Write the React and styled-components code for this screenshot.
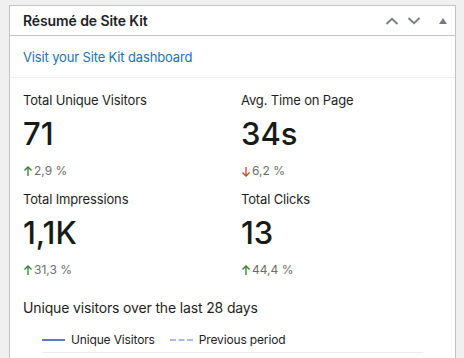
import React from 'react'
import styled, { createGlobalStyle } from 'styled-components'

const GlobalStyle = createGlobalStyle`
  body {
    margin: 0;
    background: #f0f0f1;
    font-family: Inter, "Liberation Sans", sans-serif;
    color: #1d2327;
  }
`

const Page = styled.div`
  padding: 5px 8px 0 9px;
  height: 358px;
  box-sizing: border-box;
  overflow: hidden;
`

const Panel = styled.section`
  background: #fff;
  border: 1px solid #c3c4c7;
  border-bottom: none;
  height: 400px;
`

const Header = styled.header`
  height: 29px;
  display: flex;
  align-items: center;
  justify-content: space-between;
  padding: 0 4px 0 13px;
  border-bottom: 1px solid #c3c4c7;
`

const Title = styled.h2`
  margin: 0;
  font-size: 14px;
  font-weight: 600;
  color: #1d2327;
  letter-spacing: -0.1px;
`

const Controls = styled.div`
  display: flex;
  align-items: center;
`

const Handle = styled.span`
  width: ${({ $small }) => ($small ? '16px' : '22px')};
  margin-left: ${({ $small }) => ($small ? '10px' : '0')};
  height: 16px;
  display: flex;
  align-items: center;
  justify-content: center;
  color: #787c82;
`

const LinkRow = styled.div`
  height: 41px;
  display: flex;
  align-items: center;
  padding: 0 13px;
  border-bottom: 1px solid #f0f0f1;
`

const Link = styled.a`
  font-size: 13px;
  color: #2271b1;
  text-decoration: none;
  letter-spacing: -0.15px;
`

const Body = styled.div`
  padding: 14px 13px 0 13px;
`

const Stats = styled.div`
  display: grid;
  grid-template-columns: 218px 1fr;
  row-gap: 12px;
`

const Stat = styled.div`
  display: flex;
  flex-direction: column;
`

const Label = styled.div`
  font-size: 13px;
  line-height: 16px;
  color: #1e1e1e;
  letter-spacing: -0.15px;
`

const Value = styled.div`
  margin-top: 8px;
  font-size: 31px;
  line-height: 36px;
  font-weight: 500;
  color: #161b18;
`

const Change = styled.div`
  margin-top: 11px;
  font-size: 12px;
  line-height: 16px;
  color: #6c6d6f;
  display: flex;
  align-items: center;
  gap: 1px;
`

const Arrow = styled.span`
  display: flex;
  color: ${({ $down }) => ($down ? '#b8462b' : '#2d7d2b')};
`

const ChartTitle = styled.h3`
  margin: 20px 0 0;
  font-size: 14px;
  line-height: 20px;
  font-weight: 400;
  color: #1e1e1e;
  letter-spacing: -0.15px;
`

const Legend = styled.div`
  margin-top: 14px;
  padding-left: 19px;
  display: flex;
  align-items: center;
  font-size: 12px;
  line-height: 16px;
  color: #1e1e1e;
  letter-spacing: -0.15px;
`

const LegendItem = styled.div`
  display: flex;
  align-items: center;
  gap: 6px;
  margin-right: 15px;
`

const Swatch = styled.span`
  width: 23px;
  height: 0;
  border-top: 2px ${({ $dashed }) => ($dashed ? 'dashed #a8bde6' : 'solid #5b7ac4')};
`

const Axis = styled.div`
  margin: 4px 19px 0 19px;
  border-top: 1px solid #ebebeb;
`

const ArrowIcon = ({ down }) => (
  <Arrow $down={down}>
    <svg width="10" height="11" viewBox="0 0 10 11" fill="none" stroke="currentColor" strokeWidth="1.3">
      {down ? (
        <>
          <path d="M5 1v9" />
          <path d="M1.5 6.5L5 10l3.5-3.5" />
        </>
      ) : (
        <>
          <path d="M5 10V1" />
          <path d="M1.5 4.5L5 1l3.5 3.5" />
        </>
      )}
    </svg>
  </Arrow>
)

const stats = [
  { label: 'Total Unique Visitors', value: '71', change: '2,9 %' },
  { label: 'Avg. Time on Page', value: '34s', change: '6,2 %', down: true },
  { label: 'Total Impressions', value: '1,1K', change: '31,3 %' },
  { label: 'Total Clicks', value: '13', change: '44,4 %' },
]

const App = () => {
  return (
    <>
      <GlobalStyle />
      <Page>
        <Panel>
          <Header>
            <Title>Résumé de Site Kit</Title>
            <Controls>
              <Handle>
                <svg width="14" height="8" viewBox="0 0 14 8" fill="none" stroke="currentColor" strokeWidth="1.8">
                  <path d="M1.5 7L7 1.8 12.5 7" />
                </svg>
              </Handle>
              <Handle>
                <svg width="14" height="8" viewBox="0 0 14 8" fill="none" stroke="currentColor" strokeWidth="1.8">
                  <path d="M1.5 1L7 6.2 12.5 1" />
                </svg>
              </Handle>
              <Handle $small>
                <svg width="8" height="6" viewBox="0 0 8 6" fill="currentColor">
                  <path d="M4 0L8 6H0z" />
                </svg>
              </Handle>
            </Controls>
          </Header>
          <LinkRow>
            <Link href="#">Visit your Site Kit dashboard</Link>
          </LinkRow>
          <Body>
            <Stats>
              {stats.map((s) => (
                <Stat key={s.label}>
                  <Label>{s.label}</Label>
                  <Value>{s.value}</Value>
                  <Change>
                    <ArrowIcon down={s.down} />
                    {s.change}
                  </Change>
                </Stat>
              ))}
            </Stats>
            <ChartTitle>Unique visitors over the last 28 days</ChartTitle>
            <Legend>
              <LegendItem>
                <Swatch />
                Unique Visitors
              </LegendItem>
              <LegendItem>
                <Swatch $dashed />
                Previous period
              </LegendItem>
            </Legend>
            <Axis />
          </Body>
        </Panel>
      </Page>
    </>
  )
}

export default App
